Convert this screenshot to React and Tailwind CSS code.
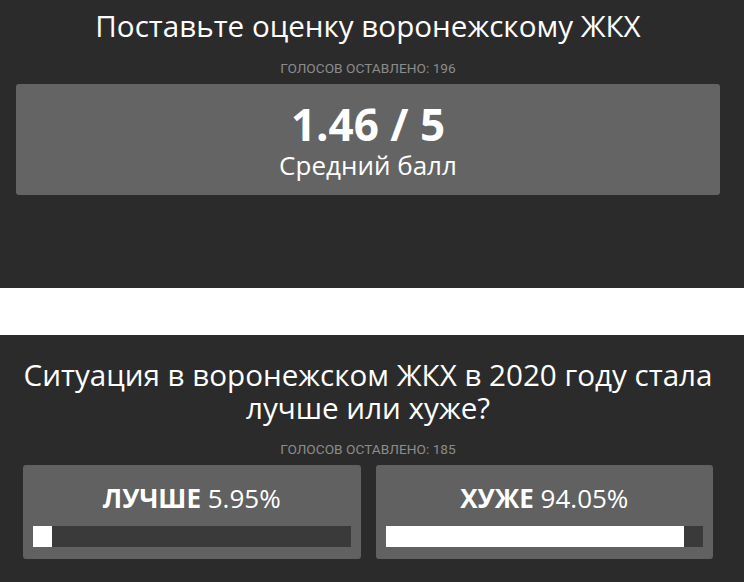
import React from 'react';

const Bar = ({ label, value }) => (
  <div className="flex-1 h-[94px] bg-[#616161] rounded-[3px] px-[10px] pt-[18px]">
    <div className="text-center text-white text-[26px] leading-[30px] font-stretch-[94%]">
      <span className="font-bold">{label}</span> {value}%
    </div>
    <div className="mt-[13px] h-[21px] bg-[#3a3a3a]">
      <div className="h-full bg-white" style={{ width: `${value}%` }} />
    </div>
  </div>
);

const Votes = ({ count }) => (
  <p className="text-center text-[13.7px] leading-[14px] text-[#8c8c8c] uppercase font-['Roboto',sans-serif]">
    Голосов оставлено: {count}
  </p>
);

export default function App() {
  return (
    <div className="w-[744px] font-['Open_Sans',sans-serif]">
      {/* оценка */}
      <section className="h-[288px] bg-[#2b2b2b] pr-[8px] pt-[7px]">
        <h1 className="text-center text-white text-[29.6px] leading-[38px] font-stretch-[90%]">
          Поставьте оценку воронежскому ЖКХ
        </h1>
        <div className="mt-[16px]">
          <Votes count={196} />
        </div>
        <div className="mx-[16px] mt-[9px] h-[111px] bg-[#646464] rounded-[3px] pt-[17px] text-center text-white">
          <div className="text-[44px] leading-[46px] font-bold font-stretch-[96%]">1.46 / 5</div>
          <div className="mt-[3px] text-[26px] leading-[30px] font-stretch-[97%]">Средний балл</div>
        </div>
      </section>

      <div className="h-[47px] bg-white" />

      {/* лучше или хуже */}
      <section className="h-[247px] bg-[#2b2b2b] pr-[8px] pt-[23px]">
        <h2 className="px-[10px] text-center text-white text-[29.6px] leading-[33px] font-stretch-[90%]">
          Ситуация в воронежском ЖКХ в 2020 году стала лучше или хуже?
        </h2>
        <div className="mt-[18px]">
          <Votes count={185} />
        </div>
        <div className="mx-[23px] mt-[9px] flex gap-[15px]">
          <Bar label="ЛУЧШЕ" value={5.95} />
          <Bar label="ХУЖЕ" value={94.05} />
        </div>
      </section>
    </div>
  );
}
